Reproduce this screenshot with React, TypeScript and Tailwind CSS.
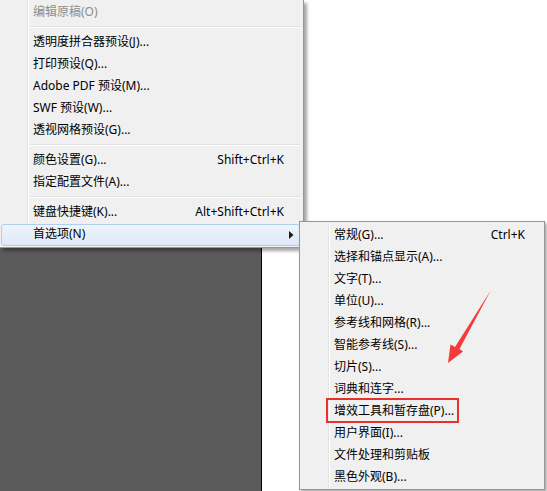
import React from "react";

type Item = { label: string; shortcut?: string; disabled?: boolean; sub?: boolean; active?: boolean };

const font = { fontFamily: '"Noto Sans", "Noto Sans CJK SC", sans-serif' };

function Row({ item, first }: { item: Item; first?: boolean }) {
  return (
    <div
      className={`relative flex items-center pl-[33px] pr-[19px] text-[12px] ${first ? "h-[23px]" : "h-[22px]"} ${
        item.disabled ? "text-[#8d8d8d]" : "text-black"
      }`}
    >
      {item.active && (
        <span className="absolute left-[1px] right-[3px] top-[1px] bottom-[-1px] rounded-[3px] border border-[#aed0ef] bg-gradient-to-b from-[#f0f5fc] to-[#dde8f7]" />
      )}
      <span className="relative flex-1">{item.label}</span>
      {item.shortcut && <span className="relative">{item.shortcut}</span>}
      {item.sub && (
        <svg className="relative mr-[-10px] mt-[1px]" width="5" height="8" viewBox="0 0 5 8">
          <path d="M0 0 L4.5 4 L0 8 Z" fill="#1a1a1a" />
        </svg>
      )}
    </div>
  );
}

function Sep() {
  return (
    <div className="flex h-[8px] items-center pl-[30px] pr-[2px]">
      <div className="h-[2px] w-full border-t border-b border-t-[#e0e0e0] border-b-white" />
    </div>
  );
}

function MainMenu() {
  return (
    <div
      className="absolute left-0 top-0 w-[304px] border-r border-b border-[#979797] bg-[#f0f0f0] pb-[2px] shadow-[3px_3px_3px_rgba(0,0,0,0.35)]"
      style={font}
    >
      <div className="absolute bottom-0 left-[27px] top-0 w-[2px] border-l border-r border-l-[#e2e3e3] border-r-white" />
      <Row item={{ label: "编辑原稿(O)", disabled: true }} first />
      <Sep />
      <Row item={{ label: "透明度拼合器预设(J)..." }} />
      <Row item={{ label: "打印预设(Q)..." }} />
      <Row item={{ label: "Adobe PDF 预设(M)..." }} />
      <Row item={{ label: "SWF 预设(W)..." }} />
      <Row item={{ label: "透视网格预设(G)..." }} />
      <Sep />
      <Row item={{ label: "颜色设置(G)...", shortcut: "Shift+Ctrl+K" }} />
      <Row item={{ label: "指定配置文件(A)..." }} />
      <Sep />
      <Row item={{ label: "键盘快捷键(K)...", shortcut: "Alt+Shift+Ctrl+K" }} />
      <Row item={{ label: "首选项(N)", sub: true, active: true }} />
    </div>
  );
}

const subItems: Item[] = [
  { label: "常规(G)...", shortcut: "Ctrl+K" },
  { label: "选择和锚点显示(A)..." },
  { label: "文字(T)..." },
  { label: "单位(U)..." },
  { label: "参考线和网格(R)..." },
  { label: "智能参考线(S)..." },
  { label: "切片(S)..." },
  { label: "词典和连字..." },
  { label: "增效工具和暂存盘(P)..." },
  { label: "用户界面(I)..." },
  { label: "文件处理和剪贴板" },
  { label: "黑色外观(B)..." },
];

function SubMenu() {
  return (
    <div
      className="absolute left-[299px] top-[221px] w-[246px] border border-[#979797] bg-[#f0f0f0] py-[1px] shadow-[2px_2px_3px_rgba(0,0,0,0.35)]"
      style={font}
    >
      <div className="absolute bottom-0 left-[28px] top-0 w-[2px] border-l border-r border-l-[#e2e3e3] border-r-white" />
      <div className="h-[1px]" />
      {subItems.map((it) => (
        <div key={it.label} className="flex h-[22px] items-center pl-[34px] pr-[19px] text-[12px] text-black">
          <span className="flex-1">{it.label}</span>
          {it.shortcut && <span>{it.shortcut}</span>}
        </div>
      ))}
    </div>
  );
}

export default function App() {
  return (
    <div className="relative h-[491px] w-[547px] overflow-hidden bg-white">
      <div className="flex h-full">
        <div className="h-full w-[262px] border-r border-black bg-[#5b5b5b]" />
        <div className="flex-1 bg-white" />
      </div>
      <MainMenu />
      <SubMenu />
      <div className="absolute left-[326px] top-[398px] h-[25px] w-[133px] border-2 border-[#e8302f]" />
      <svg className="absolute left-0 top-0" width="547" height="491" viewBox="0 0 547 491">
        <polygon points="491,290 459.5,349 463,351.5 448,363 450.5,344.5 455,347" fill="#f43a3a" />
      </svg>
    </div>
  );
}
